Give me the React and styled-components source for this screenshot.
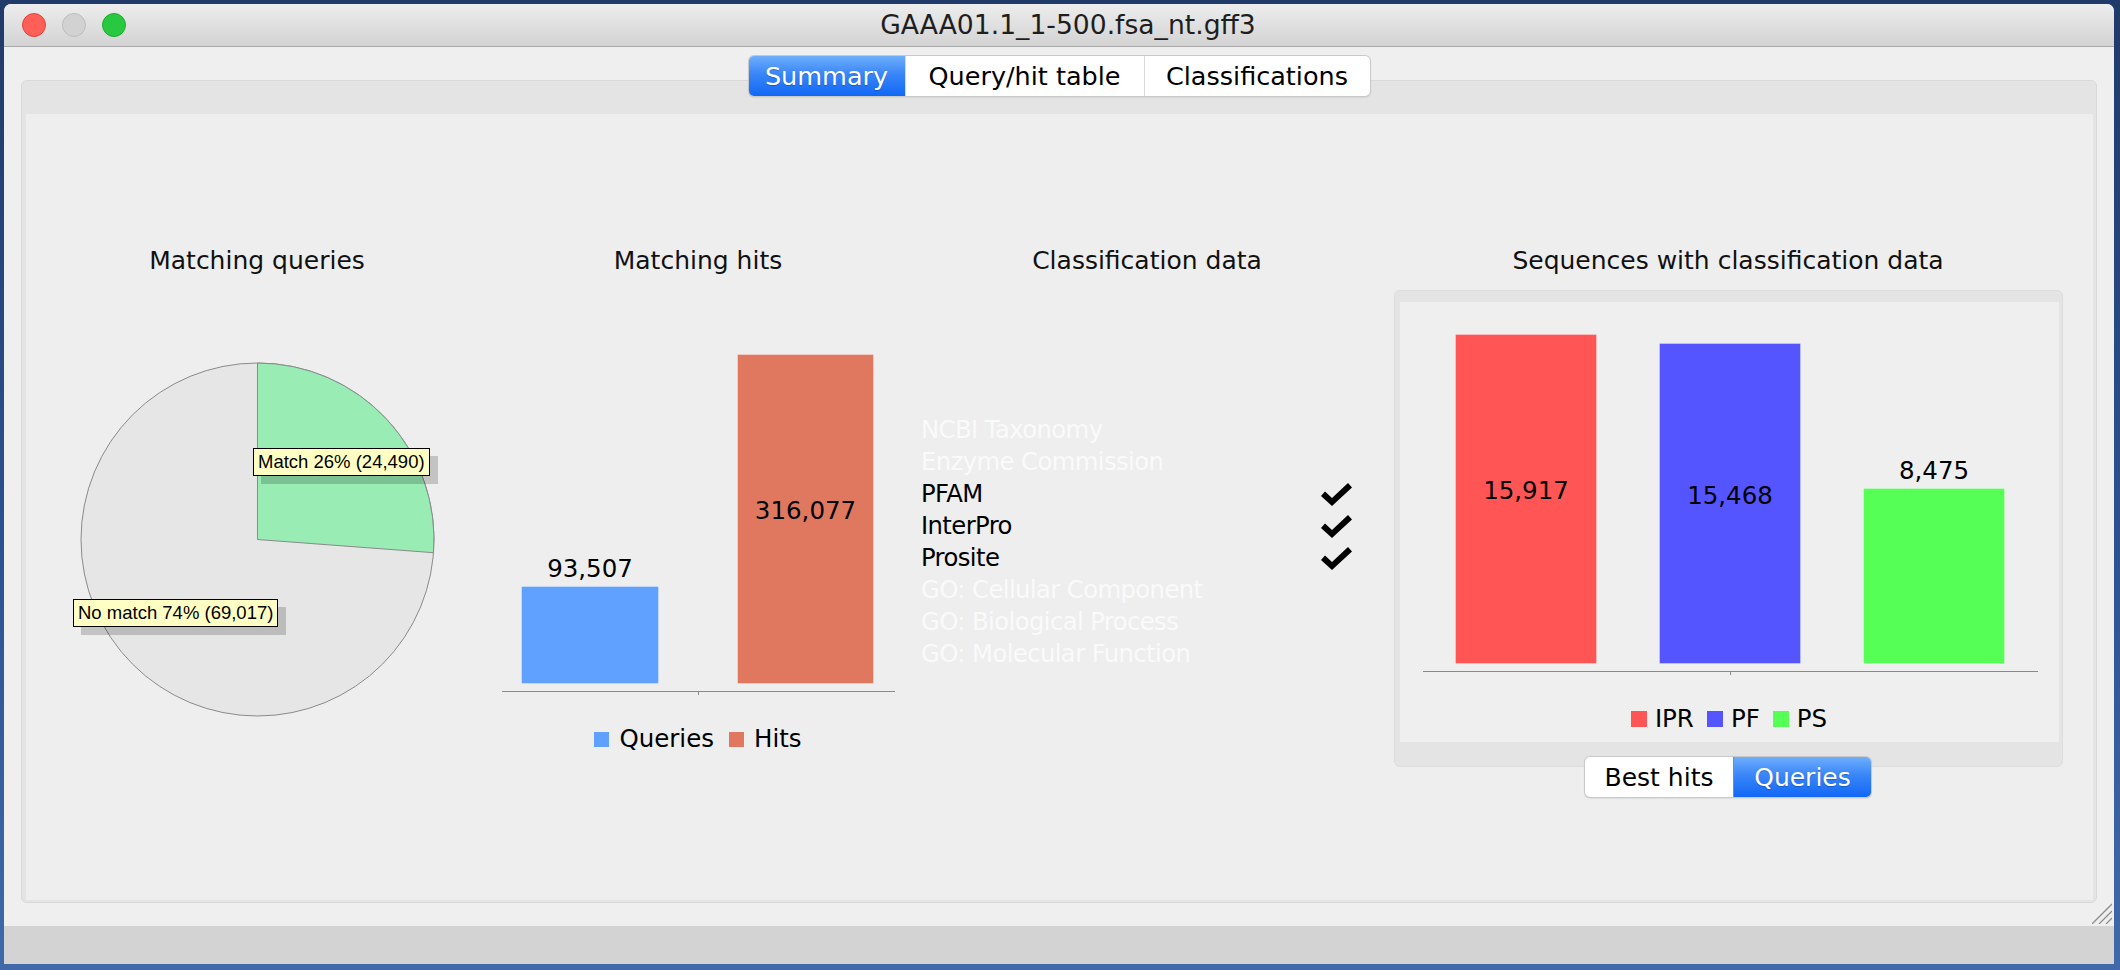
import React from 'react';
import styled, { createGlobalStyle, css } from 'styled-components';

const GlobalStyle = createGlobalStyle`
  html, body { margin: 0; padding: 0; }
  body {
    width: 2120px;
    height: 970px;
    overflow: hidden;
    font-family: "DejaVu Sans", "Noto Sans", sans-serif;
  }
  *, *::before, *::after { box-sizing: border-box; }
`;

const Desktop = styled.div`
  width: 2120px;
  height: 970px;
  padding: 4px 6px 6px 4px;
  background: linear-gradient(180deg, #203a69 0%, #2d5190 55%, #4169a9 100%);
`;

const Window = styled.div`
  height: 100%;
  display: flex;
  flex-direction: column;
  border-radius: 7px 7px 0 0;
  overflow: hidden;
  background: #efefef;
`;

const TitleBar = styled.div`
  flex: none;
  height: 43px;
  display: grid;
  grid-template-columns: 1fr auto 1fr;
  align-items: center;
  padding-left: 18px;
  background: linear-gradient(180deg, #ededed 0%, #d3d3d3 100%);
  border-bottom: 1px solid #a9a9a9;
`;

const Lights = styled.div`
  display: flex;
  gap: 16px;
`;

const Light = styled.span`
  width: 24px;
  height: 24px;
  border-radius: 50%;
  background: ${(p) => p.$fill};
  border: 1px solid ${(p) => p.$edge};
`;

const WindowTitle = styled.div`
  font-size: 26.6px;
  line-height: 32px;
  color: #1e1e1e;
  white-space: nowrap;
`;

const Main = styled.div`
  flex: none;
  display: flex;
  flex-direction: column;
  padding: 9px 17px 0;
`;

const SegmentRow = styled.div`
  position: relative;
  z-index: 1;
  display: flex;
  justify-content: center;
  margin-top: ${(p) => p.$offset || 0}px;
`;

const Segmented = styled.div`
  display: flex;
  height: 40px;
  border-radius: 5px;
  background: #fff;
  overflow: hidden;
  box-shadow: 0 0 0 1px #c9c9c9, 0 1px 2px rgba(0, 0, 0, 0.22);
`;

const Segment = styled.div`
  width: ${(p) => p.$w}px;
  display: flex;
  align-items: center;
  justify-content: center;
  font-size: ${(p) => p.$size || 25.5}px;
  color: #000;
  white-space: nowrap;
  &:not(:first-child) {
    border-left: 1px solid #dadada;
  }
  ${(p) =>
    p.$active &&
    css`
      color: #fff;
      background: linear-gradient(180deg, #6eaefb 0%, #3a86f8 45%, #1168f5 100%);
      text-shadow: 0 1px 1px rgba(0, 40, 120, 0.35);
      &:not(:first-child) {
        border-left-color: #4f92f8;
      }
    `}
`;

const TabPanel = styled.div`
  margin-top: -16px;
  height: 823px;
  background: #e4e4e4;
  border: 1px solid #d9d9d9;
  border-radius: 6px;
  padding: 33px 3px 2px 4px;
`;

const PanelInner = styled.div`
  height: 100%;
  background: #eeeeee;
  display: grid;
  grid-template-columns: 462px 420px 478px 684px;
  align-items: start;
  padding-top: 132px;
`;

const Column = styled.div`
  display: flex;
  flex-direction: column;
  align-items: center;
`;

const ChartTitle = styled.div`
  font-size: 25px;
  line-height: 30px;
  color: #111;
  white-space: nowrap;
`;

const PieBox = styled.div`
  position: relative;
  width: 400px;
  height: 400px;
  margin-top: 64px;
`;

const PieLabel = styled.div`
  position: absolute;
  left: ${(p) => p.$x}px;
  top: ${(p) => p.$y}px;
  padding: 0 4px;
  font-family: "Liberation Sans", Arial, sans-serif;
  font-size: 18.5px;
  line-height: 26px;
  color: #000;
  white-space: nowrap;
  background: #ffffc4;
  border: 1px solid #000;
  box-shadow: 8px 8px 0 rgba(0, 0, 0, 0.18);
`;

const ChartSvg = styled.svg`
  display: block;
  margin-top: ${(p) => p.$mt || 0}px;
  font-family: "DejaVu Sans", sans-serif;
`;

const Legend = styled.div`
  display: flex;
  align-items: center;
  gap: ${(p) => p.$gap}px;
  margin-top: ${(p) => p.$mt}px;
`;

const LegendItem = styled.div`
  display: flex;
  align-items: center;
  gap: ${(p) => p.$gap}px;
`;

const Swatch = styled.span`
  width: ${(p) => p.$size}px;
  height: ${(p) => p.$size}px;
  background: ${(p) => p.$color};
`;

const LegendText = styled.span`
  font-size: 24.5px;
  line-height: 30px;
  color: #000;
`;

const List = styled.div`
  align-self: flex-start;
  margin: 138px 0 0 13px;
  width: 431px;
  display: flex;
  flex-direction: column;
`;

const ListRow = styled.div`
  height: 32px;
  display: flex;
  align-items: center;
  justify-content: space-between;
  font-size: 24.3px;
  line-height: 32px;
  letter-spacing: -0.6px;
  color: ${(p) => (p.$on ? '#000' : '#fafafa')};
  white-space: nowrap;
`;

const ClassPanel = styled.div`
  width: 669px;
  margin-top: 14px;
  background: #e4e4e4;
  border: 1px solid #dddddd;
  border-radius: 6px;
  padding: 11px 3px 24px 5px;
`;

const ClassInner = styled.div`
  height: 440px;
  background: #efefef;
  display: flex;
  flex-direction: column;
  align-items: center;
`;

const Footer = styled.div`
  flex: none;
  position: relative;
  height: 23px;
`;

const Grip = styled.svg`
  position: absolute;
  right: 2px;
  bottom: 2px;
`;

const BottomBar = styled.div`
  flex: 1;
  background: #d3d3d3;
`;

function Check() {
  return (
    <svg width="31" height="23" viewBox="0 0 31 23">
      <polygon points="0,13 4,8.5 11,15 27,0 31,4.5 11,23" fill="#000" />
    </svg>
  );
}

function Pie({ match, noMatch }) {
  const cx = 200.5;
  const cy = 199.5;
  const r = 176.5;
  const frac = match / (match + noMatch);
  const a = frac * 2 * Math.PI;
  const x2 = cx + r * Math.sin(a);
  const y2 = cy - r * Math.cos(a);
  const large = frac > 0.5 ? 1 : 0;
  return (
    <svg width="400" height="400" viewBox="0 0 400 400">
      <circle cx={cx} cy={cy} r={r} fill="#e6e6e6" stroke="#8a8a8a" strokeWidth="1" />
      <path
        d={`M${cx},${cy} L${cx},${cy - r} A${r},${r} 0 ${large} 1 ${x2},${y2} Z`}
        fill="#98ecb4"
        stroke="#8a8a8a"
        strokeWidth="1"
      />
    </svg>
  );
}

function BarChart({ width, height, bars, axis, mt }) {
  return (
    <ChartSvg width={width} height={height} viewBox={`0 0 ${width} ${height}`} $mt={mt}>
      {bars.map((b) => (
        <g key={b.label}>
          <rect
            x={b.x + 0.5}
            y={b.top + 0.5}
            width={b.w - 1}
            height={axis.base - b.top - 1}
            fill={b.color}
            stroke="rgba(255,255,255,0.3)"
            strokeWidth="1"
          />
          <text x={b.x + b.w / 2} y={b.ly} textAnchor="middle" fontSize="24.5" fill="#000">
            {b.label}
          </text>
        </g>
      ))}
      <line x1={axis.x1} x2={axis.x2} y1={axis.y + 0.5} y2={axis.y + 0.5} stroke="#8a8a8a" strokeWidth="1" />
      <line x1={axis.tick + 0.5} x2={axis.tick + 0.5} y1={axis.y} y2={axis.y + 4} stroke="#8a8a8a" strokeWidth="1" />
    </ChartSvg>
  );
}

const classifications = [
  { name: 'NCBI Taxonomy', on: false },
  { name: 'Enzyme Commission', on: false },
  { name: 'PFAM', on: true },
  { name: 'InterPro', on: true },
  { name: 'Prosite', on: true },
  { name: 'GO: Cellular Component', on: false },
  { name: 'GO: Biological Process', on: false },
  { name: 'GO: Molecular Function', on: false },
];

export default function App() {
  return (
    <>
      <GlobalStyle />
      <Desktop>
        <Window>
          <TitleBar>
            <Lights>
              <Light $fill="#fe5f57" $edge="#e0443e" />
              <Light $fill="#d2d2d2" $edge="#bdbdbd" />
              <Light $fill="#28c840" $edge="#1dad2b" />
            </Lights>
            <WindowTitle>GAAA01.1_1-500.fsa_nt.gff3</WindowTitle>
            <div />
          </TitleBar>

          <Main>
            <SegmentRow>
              <Segmented>
                <Segment $w={156} $active>Summary</Segment>
                <Segment $w={239}>Query/hit table</Segment>
                <Segment $w={226}>Classifications</Segment>
              </Segmented>
            </SegmentRow>

            <TabPanel>
              <PanelInner>
                <Column>
                  <ChartTitle>Matching queries</ChartTitle>
                  <PieBox>
                    <Pie match={24490} noMatch={69017} />
                    <PieLabel $x={196} $y={108}>Match 26% (24,490)</PieLabel>
                    <PieLabel $x={16} $y={259}>No match 74% (69,017)</PieLabel>
                  </PieBox>
                </Column>

                <Column>
                  <ChartTitle>Matching hits</ChartTitle>
                  <BarChart
                    width={420}
                    height={360}
                    mt={64}
                    axis={{ x1: 14, x2: 407, y: 351, tick: 210, base: 344 }}
                    bars={[
                      { x: 33, w: 138, top: 246, color: '#60a0ff', label: '93,507', ly: 237 },
                      { x: 249, w: 137, top: 14, color: '#e07860', label: '316,077', ly: 179 },
                    ]}
                  />
                  <Legend $gap={15} $mt={24}>
                    <LegendItem $gap={10}>
                      <Swatch $size={15} $color="#60a0ff" />
                      <LegendText>Queries</LegendText>
                    </LegendItem>
                    <LegendItem $gap={10}>
                      <Swatch $size={15} $color="#e07860" />
                      <LegendText>Hits</LegendText>
                    </LegendItem>
                  </Legend>
                </Column>

                <Column>
                  <ChartTitle>Classification data</ChartTitle>
                  <List>
                    {classifications.map((c) => (
                      <ListRow key={c.name} $on={c.on}>
                        <span>{c.name}</span>
                        {c.on && <Check />}
                      </ListRow>
                    ))}
                  </List>
                </Column>

                <Column>
                  <ChartTitle>Sequences with classification data</ChartTitle>
                  <ClassPanel>
                    <ClassInner>
                      <BarChart
                        width={659}
                        height={380}
                        axis={{ x1: 23, x2: 638, y: 369, tick: 330, base: 362 }}
                        bars={[
                          { x: 55, w: 142, top: 32, color: '#ff5555', label: '15,917', ly: 197 },
                          { x: 259, w: 142, top: 41, color: '#5555ff', label: '15,468', ly: 202 },
                          { x: 463, w: 142, top: 186, color: '#55ff55', label: '8,475', ly: 177 },
                        ]}
                      />
                      <Legend $gap={13} $mt={22}>
                        <LegendItem $gap={8}>
                          <Swatch $size={16} $color="#ff5555" />
                          <LegendText>IPR</LegendText>
                        </LegendItem>
                        <LegendItem $gap={8}>
                          <Swatch $size={16} $color="#5555ff" />
                          <LegendText>PF</LegendText>
                        </LegendItem>
                        <LegendItem $gap={8}>
                          <Swatch $size={16} $color="#55ff55" />
                          <LegendText>PS</LegendText>
                        </LegendItem>
                      </Legend>
                    </ClassInner>
                  </ClassPanel>
                  <SegmentRow $offset={-10}>
                    <Segmented>
                      <Segment $w={148} $size={25}>Best hits</Segment>
                      <Segment $w={138} $size={25} $active>Queries</Segment>
                    </Segmented>
                  </SegmentRow>
                </Column>
              </PanelInner>
            </TabPanel>
          </Main>

          <Footer>
            <Grip width="20" height="21" viewBox="0 0 20 21">
              <g stroke="#8e8e8e" strokeWidth="1.3">
                <line x1="0" y1="21" x2="20" y2="1" />
                <line x1="7" y1="21" x2="20" y2="8" />
                <line x1="14" y1="21" x2="20" y2="15" />
              </g>
            </Grip>
          </Footer>
          <BottomBar />
        </Window>
      </Desktop>
    </>
  );
}
